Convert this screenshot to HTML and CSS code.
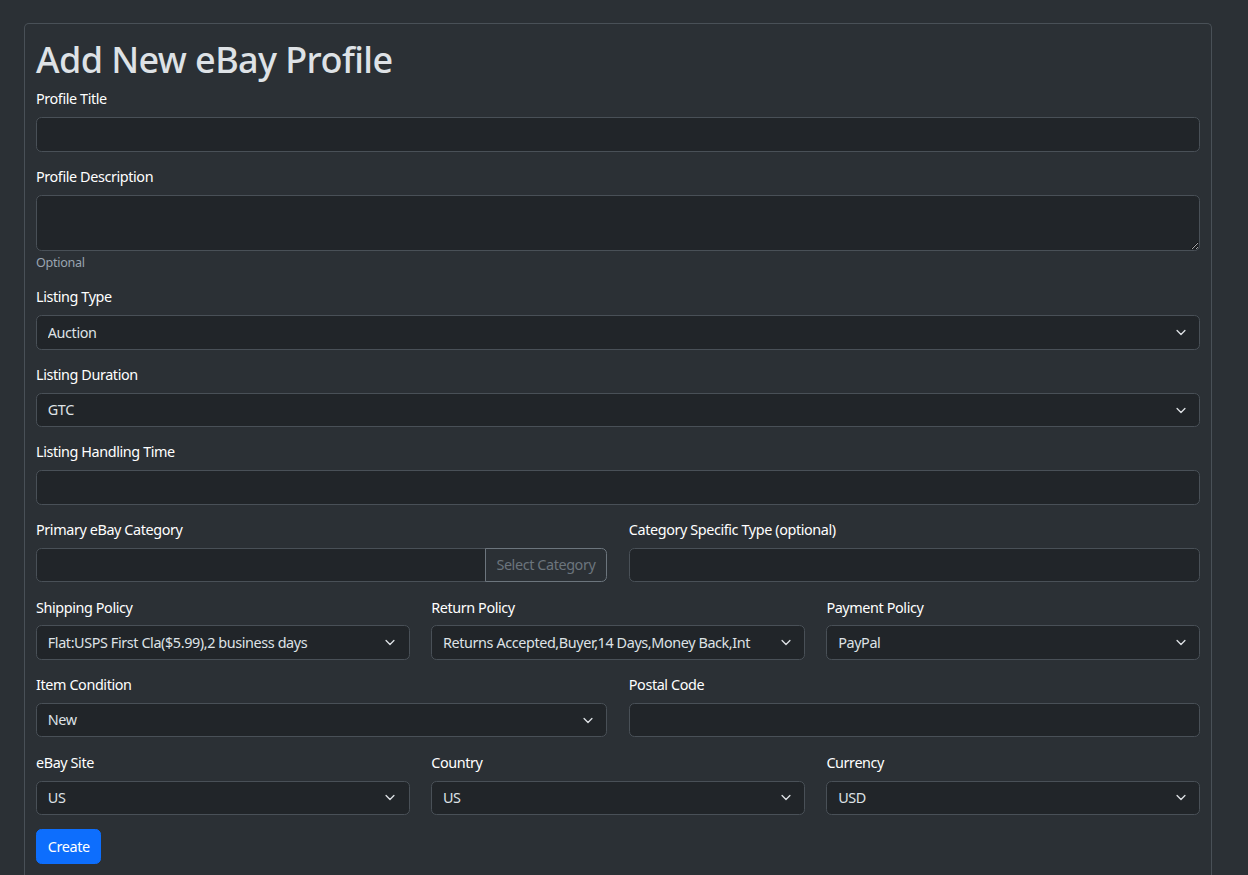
FILE: index.html
```html
<!DOCTYPE html>
<html lang="en">
<head>
    <meta charset="UTF-8">
    <meta name="viewport" content="width=device-width, initial-scale=1.0">
    <title>Add New eBay Profile</title>
    <link rel="stylesheet" href="styles.css">
</head>
<body>
    <div class="card">
        <h1>Add New eBay Profile</h1>
        <form>
            <div class="field">
                <label for="title">Profile Title</label>
                <input type="text" id="title" class="control">
            </div>

            <div class="field">
                <label for="description">Profile Description</label>
                <textarea id="description" class="control" rows="2"></textarea>
                <div class="hint">Optional</div>
            </div>

            <div class="field">
                <label for="listing-type">Listing Type</label>
                <select id="listing-type" class="control select">
                    <option>Auction</option>
                    <option>Fixed Price</option>
                </select>
            </div>

            <div class="field">
                <label for="duration">Listing Duration</label>
                <select id="duration" class="control select">
                    <option>GTC</option>
                    <option>Days_7</option>
                </select>
            </div>

            <div class="field">
                <label for="handling">Listing Handling Time</label>
                <input type="text" id="handling" class="control">
            </div>

            <div class="row two">
                <div class="field">
                    <label for="category">Primary eBay Category</label>
                    <div class="input-group">
                        <input type="text" id="category" class="control">
                        <button type="button" class="btn-outline">Select Category</button>
                    </div>
                </div>
                <div class="field">
                    <label for="category-type">Category Specific Type (optional)</label>
                    <input type="text" id="category-type" class="control">
                </div>
            </div>

            <div class="row three">
                <div class="field">
                    <label for="shipping">Shipping Policy</label>
                    <select id="shipping" class="control select">
                        <option>Flat:USPS First Cla($5.99),2 business days</option>
                    </select>
                </div>
                <div class="field">
                    <label for="return">Return Policy</label>
                    <select id="return" class="control select">
                        <option>Returns Accepted,Buyer,14 Days,Money Back,Int</option>
                    </select>
                </div>
                <div class="field">
                    <label for="payment">Payment Policy</label>
                    <select id="payment" class="control select">
                        <option>PayPal</option>
                    </select>
                </div>
            </div>

            <div class="row two">
                <div class="field">
                    <label for="condition">Item Condition</label>
                    <select id="condition" class="control select">
                        <option>New</option>
                        <option>Used</option>
                    </select>
                </div>
                <div class="field">
                    <label for="postal">Postal Code</label>
                    <input type="text" id="postal" class="control">
                </div>
            </div>

            <div class="row three">
                <div class="field">
                    <label for="site">eBay Site</label>
                    <select id="site" class="control select">
                        <option>US</option>
                    </select>
                </div>
                <div class="field">
                    <label for="country">Country</label>
                    <select id="country" class="control select">
                        <option>US</option>
                    </select>
                </div>
                <div class="field">
                    <label for="currency">Currency</label>
                    <select id="currency" class="control select">
                        <option>USD</option>
                    </select>
                </div>
            </div>

            <button type="submit" class="btn-primary">Create</button>
        </form>
    </div>
</body>
</html>
```

FILE: styles.css
```css
html {
    font-size: 14.4px;
}

body {
    margin: 0;
    font-family: "Noto Sans", "Open Sans", Arial, sans-serif;
    font-size: 1rem;
    line-height: 1.5;
    letter-spacing: -0.4px;
    color: #dee2e6;
    background-color: #2b3035;
}

.card {
    margin: 23px 36px 0 24px;
    padding: 14px 11px 40px;
    border: 1px solid #495057;
    border-bottom: none;
    border-radius: 5px 5px 0 0;
    background-color: #2b3035;
    min-height: 820px;
    box-sizing: border-box;
}

h1 {
    margin: 0 0 7.2px;
    font-size: 36px;
    font-weight: 500;
    line-height: 1.2;
    letter-spacing: -0.6px;
}

.field {
    margin-bottom: 14.4px;
}

label {
    display: block;
    margin-bottom: 7.2px;
    color: #fff;
}

.control {
    display: block;
    width: 100%;
    box-sizing: border-box;
    padding: 5.4px 10.8px;
    font-family: inherit;
    font-size: 1rem;
    line-height: 1.5;
    letter-spacing: inherit;
    color: #dee2e6;
    background-color: #212529;
    border: 1px solid #495057;
    border-radius: 5.4px;
    outline: none;
}

textarea.control {
    min-height: 56px;
    height: 56px;
}

.select {
    appearance: none;
    -webkit-appearance: none;
    padding-right: 36px;
    background-image: url("data:image/svg+xml,%3csvg xmlns='http://www.w3.org/2000/svg' viewBox='0 0 16 16'%3e%3cpath fill='none' stroke='%23dee2e6' stroke-linecap='round' stroke-linejoin='round' stroke-width='2' d='m2 5 6 6 6-6'/%3e%3c/svg%3e");
    background-repeat: no-repeat;
    background-position: right 10.8px center;
    background-size: 14.4px 10.8px;
}

.hint {
    margin-top: 3.6px;
    font-size: 12.6px;
    line-height: 1.4;
    letter-spacing: -0.3px;
    color: #9aa5b1;
}

.row {
    display: grid;
    column-gap: 21.6px;
}

.row.two {
    grid-template-columns: repeat(2, 1fr);
}

.row.three {
    grid-template-columns: repeat(3, 1fr);
}

.input-group {
    display: flex;
}

.input-group .control {
    flex: 1;
    border-top-right-radius: 0;
    border-bottom-right-radius: 0;
}

.btn-outline {
    margin-left: -1px;
    padding: 5.4px 10.8px;
    font-family: inherit;
    font-size: 1rem;
    line-height: 1.5;
    letter-spacing: inherit;
    color: #6c757d;
    background: transparent;
    border: 1px solid #6c757d;
    border-radius: 0 5.4px 5.4px 0;
    cursor: pointer;
}

.btn-primary {
    padding: 5.4px 10.8px;
    font-family: inherit;
    font-size: 1rem;
    line-height: 1.5;
    letter-spacing: inherit;
    color: #fff;
    background-color: #0d6efd;
    border: 1px solid #0d6efd;
    border-radius: 5.4px;
    cursor: pointer;
}
```
